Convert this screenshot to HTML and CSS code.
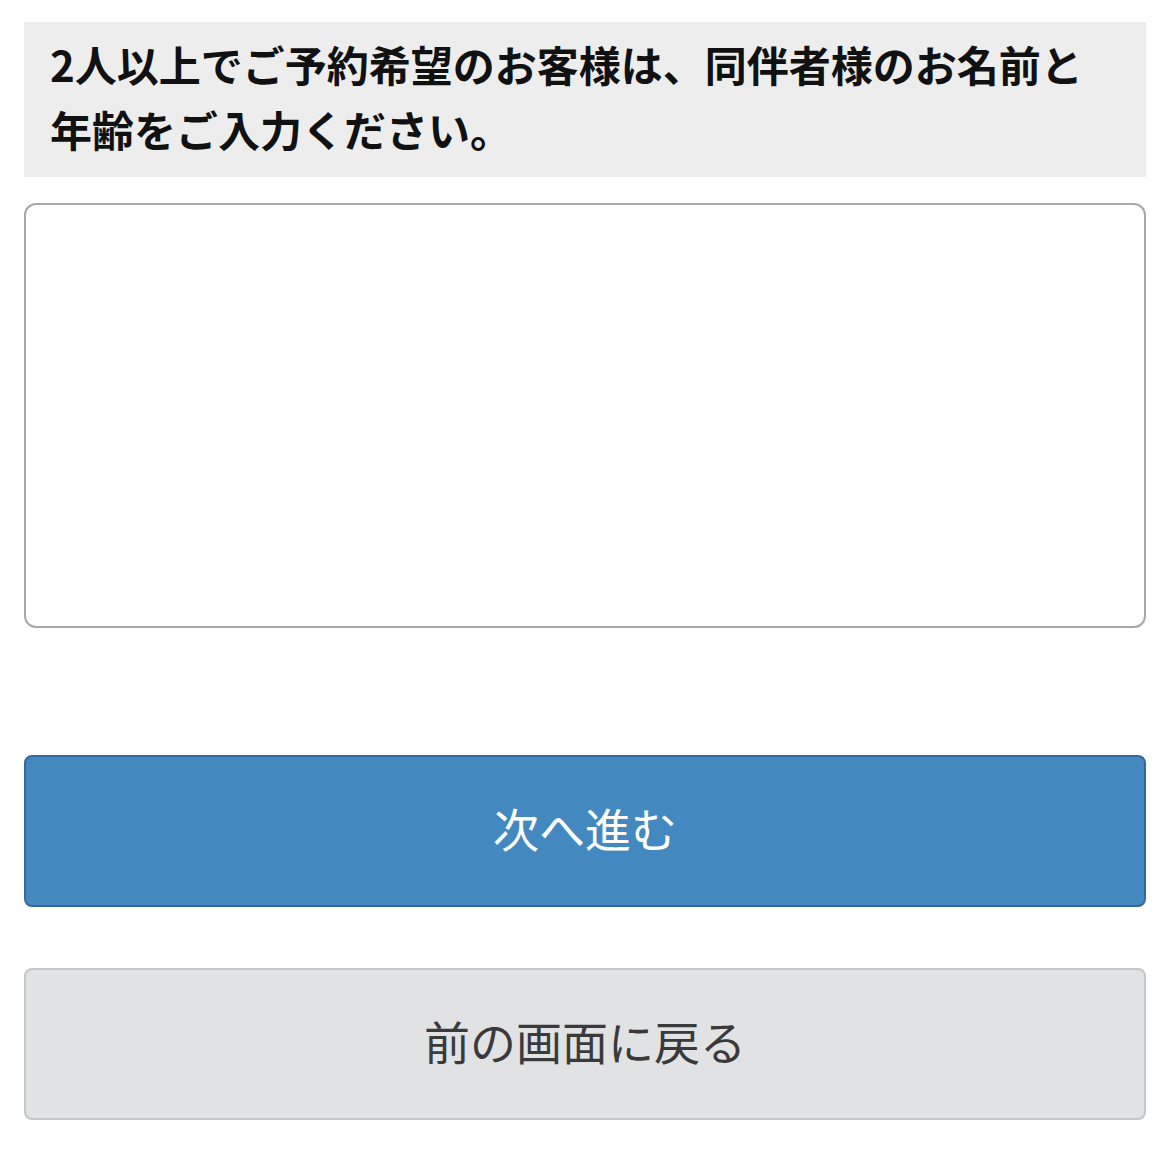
FILE: index.html
```html
<!DOCTYPE html>
<html lang="ja">
<head>
  <meta charset="UTF-8" />
  <meta name="viewport" content="width=device-width, initial-scale=1.0"/>
  <title>同伴者情報の入力</title>
  <link rel="stylesheet" href="styles.css">
</head>
<body>
  <div class="form-wrap">
    <div class="question">2人以上でご予約希望のお客様は、同伴者様のお名前と年齢をご入力ください。</div>
    <textarea class="answer" name="companions"></textarea>

    <div class="actions">
      <button class="btn btn-next" type="button">次へ進む</button>
      <button class="btn btn-back" type="button">前の画面に戻る</button>
    </div>
  </div>
</body>
</html>
```

FILE: styles.css
```css
* { box-sizing: border-box; margin: 0; padding: 0; }
body {
  font-family: "Noto Sans CJK JP", "Noto Sans", sans-serif;
  background: #fff;
  color: #111;
}
.form-wrap {
  padding: 22px 24px 30px 24px;
  display: flex;
  flex-direction: column;
}
.question {
  background: #EDEDED;
  font-size: 42px;
  font-weight: 700;
  line-height: 65px;
  padding: 9px 32px 16px 26px;
  color: #111;
}
.answer {
  display: block;
  width: 100%;
  height: 425px;
  margin-top: 26px;
  border: 2px solid #A8A8A8;
  border-radius: 12px;
  background: #fff;
  resize: none;
  font-family: inherit;
  font-size: 32px;
  padding: 12px;
}
.actions {
  margin-top: 127px;
  display: flex;
  flex-direction: column;
  gap: 61px;
}
.btn {
  width: 100%;
  height: 152px;
  border-radius: 8px;
  font-family: inherit;
  font-size: 46px;
  font-weight: 400;
  padding-bottom: 8px;
  cursor: pointer;
}
.btn-next {
  background: #4389BF;
  border: 2px solid #35699A;
  color: #fff;
}
.btn-back {
  background: #E1E2E4;
  border: 2px solid #C5C6C9;
  color: #3A3A3A;
}
```
